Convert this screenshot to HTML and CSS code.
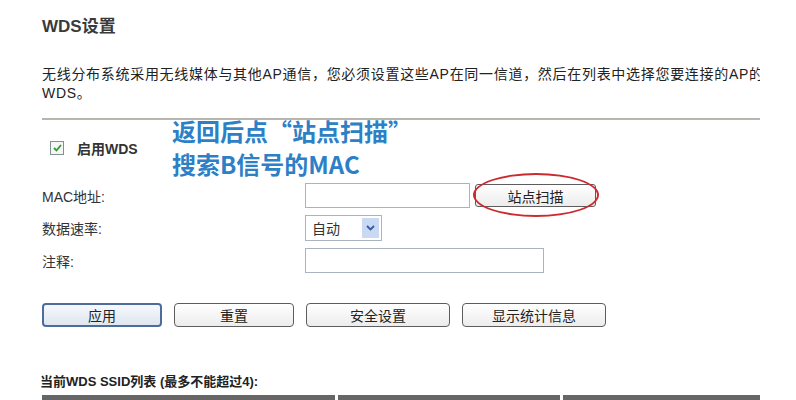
FILE: index.html
```html
<!DOCTYPE html>
<html lang="zh-CN">
  <head>
    <meta charset="UTF-8" />
    <meta name="viewport" content="width=device-width, initial-scale=1.0" />
    <title>WDS设置</title>
    <link rel="stylesheet" href="styles.css">
  </head>
  <body>
    <div class="page">
      <h1>WDS设置</h1>

      <p class="intro">
        无线分布系统采用无线媒体与其他AP通信，您必须设置这些AP在同一信道，然后在列表中选择您要连接的AP的<br />WDS。
      </p>

      <hr class="rule" />

      <!-- WDS form -->
      <div class="form">
        <div class="note">返回后点“站点扫描”<br />搜索B信号的MAC</div>

        <div class="enable">
          <span class="check">
            <svg width="9" height="8" viewBox="0 0 9 8"><path d="M1 4 L3.5 6.5 L8 1" fill="none" stroke="#2f9a2f" stroke-width="1.8"/></svg>
          </span>
          <b>启用WDS</b>
        </div>

        <div class="row first">
          <label>MAC地址:</label>
          <div class="field">
            <span class="input mac"></span>
            <span class="scan-wrap">
              <button class="btn scan">站点扫描</button>
              <span class="ring"></span>
            </span>
          </div>
        </div>

        <div class="row">
          <label>数据速率:</label>
          <div class="field">
            <span class="select">
              <span class="select-text">自动</span>
              <span class="select-arrow">
                <svg width="9" height="6" viewBox="0 0 9 6"><path d="M1 1 L4.5 4.5 L8 1" fill="none" stroke="#3a5a9a" stroke-width="1.8"/></svg>
              </span>
            </span>
          </div>
        </div>

        <div class="row">
          <label>注释:</label>
          <div class="field">
            <span class="input comment"></span>
          </div>
        </div>

        <div class="actions">
          <button class="btn wide primary">应用</button>
          <button class="btn wide">重置</button>
          <button class="btn wider">安全设置</button>
          <button class="btn wider">显示统计信息</button>
        </div>
      </div>

      <h2 class="list-title">当前WDS SSID列表 (最多不能超过4):</h2>
      <div class="table-head">
        <span class="col c1"></span>
        <span class="col c2"></span>
        <span class="col c3"></span>
      </div>
    </div>
  </body>
</html>
```

FILE: styles.css
```css
body {
  margin: 0;
  background-color: #fff;
  color: #333;
  font-family: "Liberation Sans", "Noto Sans CJK SC", sans-serif;
  font-size: 14px;
}

.page {
  width: 718px;
  padding: 16px 0 0 42px;
  overflow: hidden;
  height: 384px;
}

h1 {
  font-size: 17px;
  font-weight: bold;
  color: #3a3a3a;
  margin: 0;
  line-height: 22px;
}

.intro {
  margin: 27px 0 0;
  line-height: 19px;
  letter-spacing: 0.7px;
  white-space: nowrap;
  color: #222;
}

.rule {
  margin: 15px 0 0;
  border: none;
  border-top: 2px solid #b6b6ae;
  height: 0;
}

.form {
  position: relative;
}

.note {
  position: absolute;
  left: 130px;
  top: -20px;
  font-family: "Noto Sans CJK SC", sans-serif;
  font-size: 24px;
  font-weight: bold;
  line-height: 33px;
  color: #2d7fc6;
  white-space: nowrap;
}

.enable {
  display: flex;
  align-items: center;
  gap: 13px;
  height: 28px;
  margin: 14px 0 0 8px;
}

.enable b {
  font-size: 14px;
  color: #333;
}

.check {
  width: 12px;
  height: 12px;
  border: 1px solid #7d9292;
  display: flex;
  align-items: center;
  justify-content: center;
  background-color: #f6f6f6;
}

.row {
  display: grid;
  grid-template-columns: 263px auto;
  align-items: center;
  margin-top: 7px;
}

.row.first {
  margin-top: 21px;
}

.row label {
  color: #333;
}

.field {
  display: flex;
  align-items: center;
  gap: 5px;
}

.input {
  display: block;
  height: 23px;
  border: 1px solid #a8b4c0;
  background-color: #fff;
}

.mac {
  width: 163px;
}

.comment {
  width: 237px;
}

.scan-wrap {
  position: relative;
  display: block;
}

.btn {
  font-family: "Liberation Sans", "Noto Sans CJK SC", sans-serif;
  font-size: 14px;
  color: #222;
  height: 24px;
  padding: 0;
  border: 1px solid #5d5d5d;
  border-radius: 4px;
  background: linear-gradient(#ffffff, #ececec);
}

.scan {
  width: 121px;
  height: 23px;
  border-radius: 3px;
  display: block;
}

.ring {
  position: absolute;
  left: -2px;
  top: -11px;
  width: 122px;
  height: 40px;
  border: 2.5px solid #cc2a30;
  border-radius: 50%;
}

.select {
  display: flex;
  align-items: center;
  width: 75px;
  height: 24px;
  border: 1px solid #a8b4c0;
  background-color: #fff;
}

.select-text {
  flex: 1;
  padding-left: 6px;
}

.select-arrow {
  width: 17px;
  height: 20px;
  margin-right: 2px;
  background-color: #c9d8f3;
  display: flex;
  align-items: center;
  justify-content: center;
}

.actions {
  display: flex;
  gap: 12px;
  margin-top: 30px;
}

.wide {
  width: 120px;
}

.wider {
  width: 144px;
}

.primary {
  border: 2px solid #4c6d9c;
  background: linear-gradient(#f6f8fc, #dfe6f0);
}

.list-title {
  font-size: 13px;
  font-weight: bold;
  color: #222;
  margin: 46px 0 0 -2px;
  line-height: 18px;
}

.table-head {
  display: flex;
  gap: 3px;
  margin-top: 4px;
}

.col {
  height: 10px;
  background-color: #666;
}

.c1 {
  width: 293px;
}

.c2 {
  width: 222px;
}

.c3 {
  width: 197px;
}
```
